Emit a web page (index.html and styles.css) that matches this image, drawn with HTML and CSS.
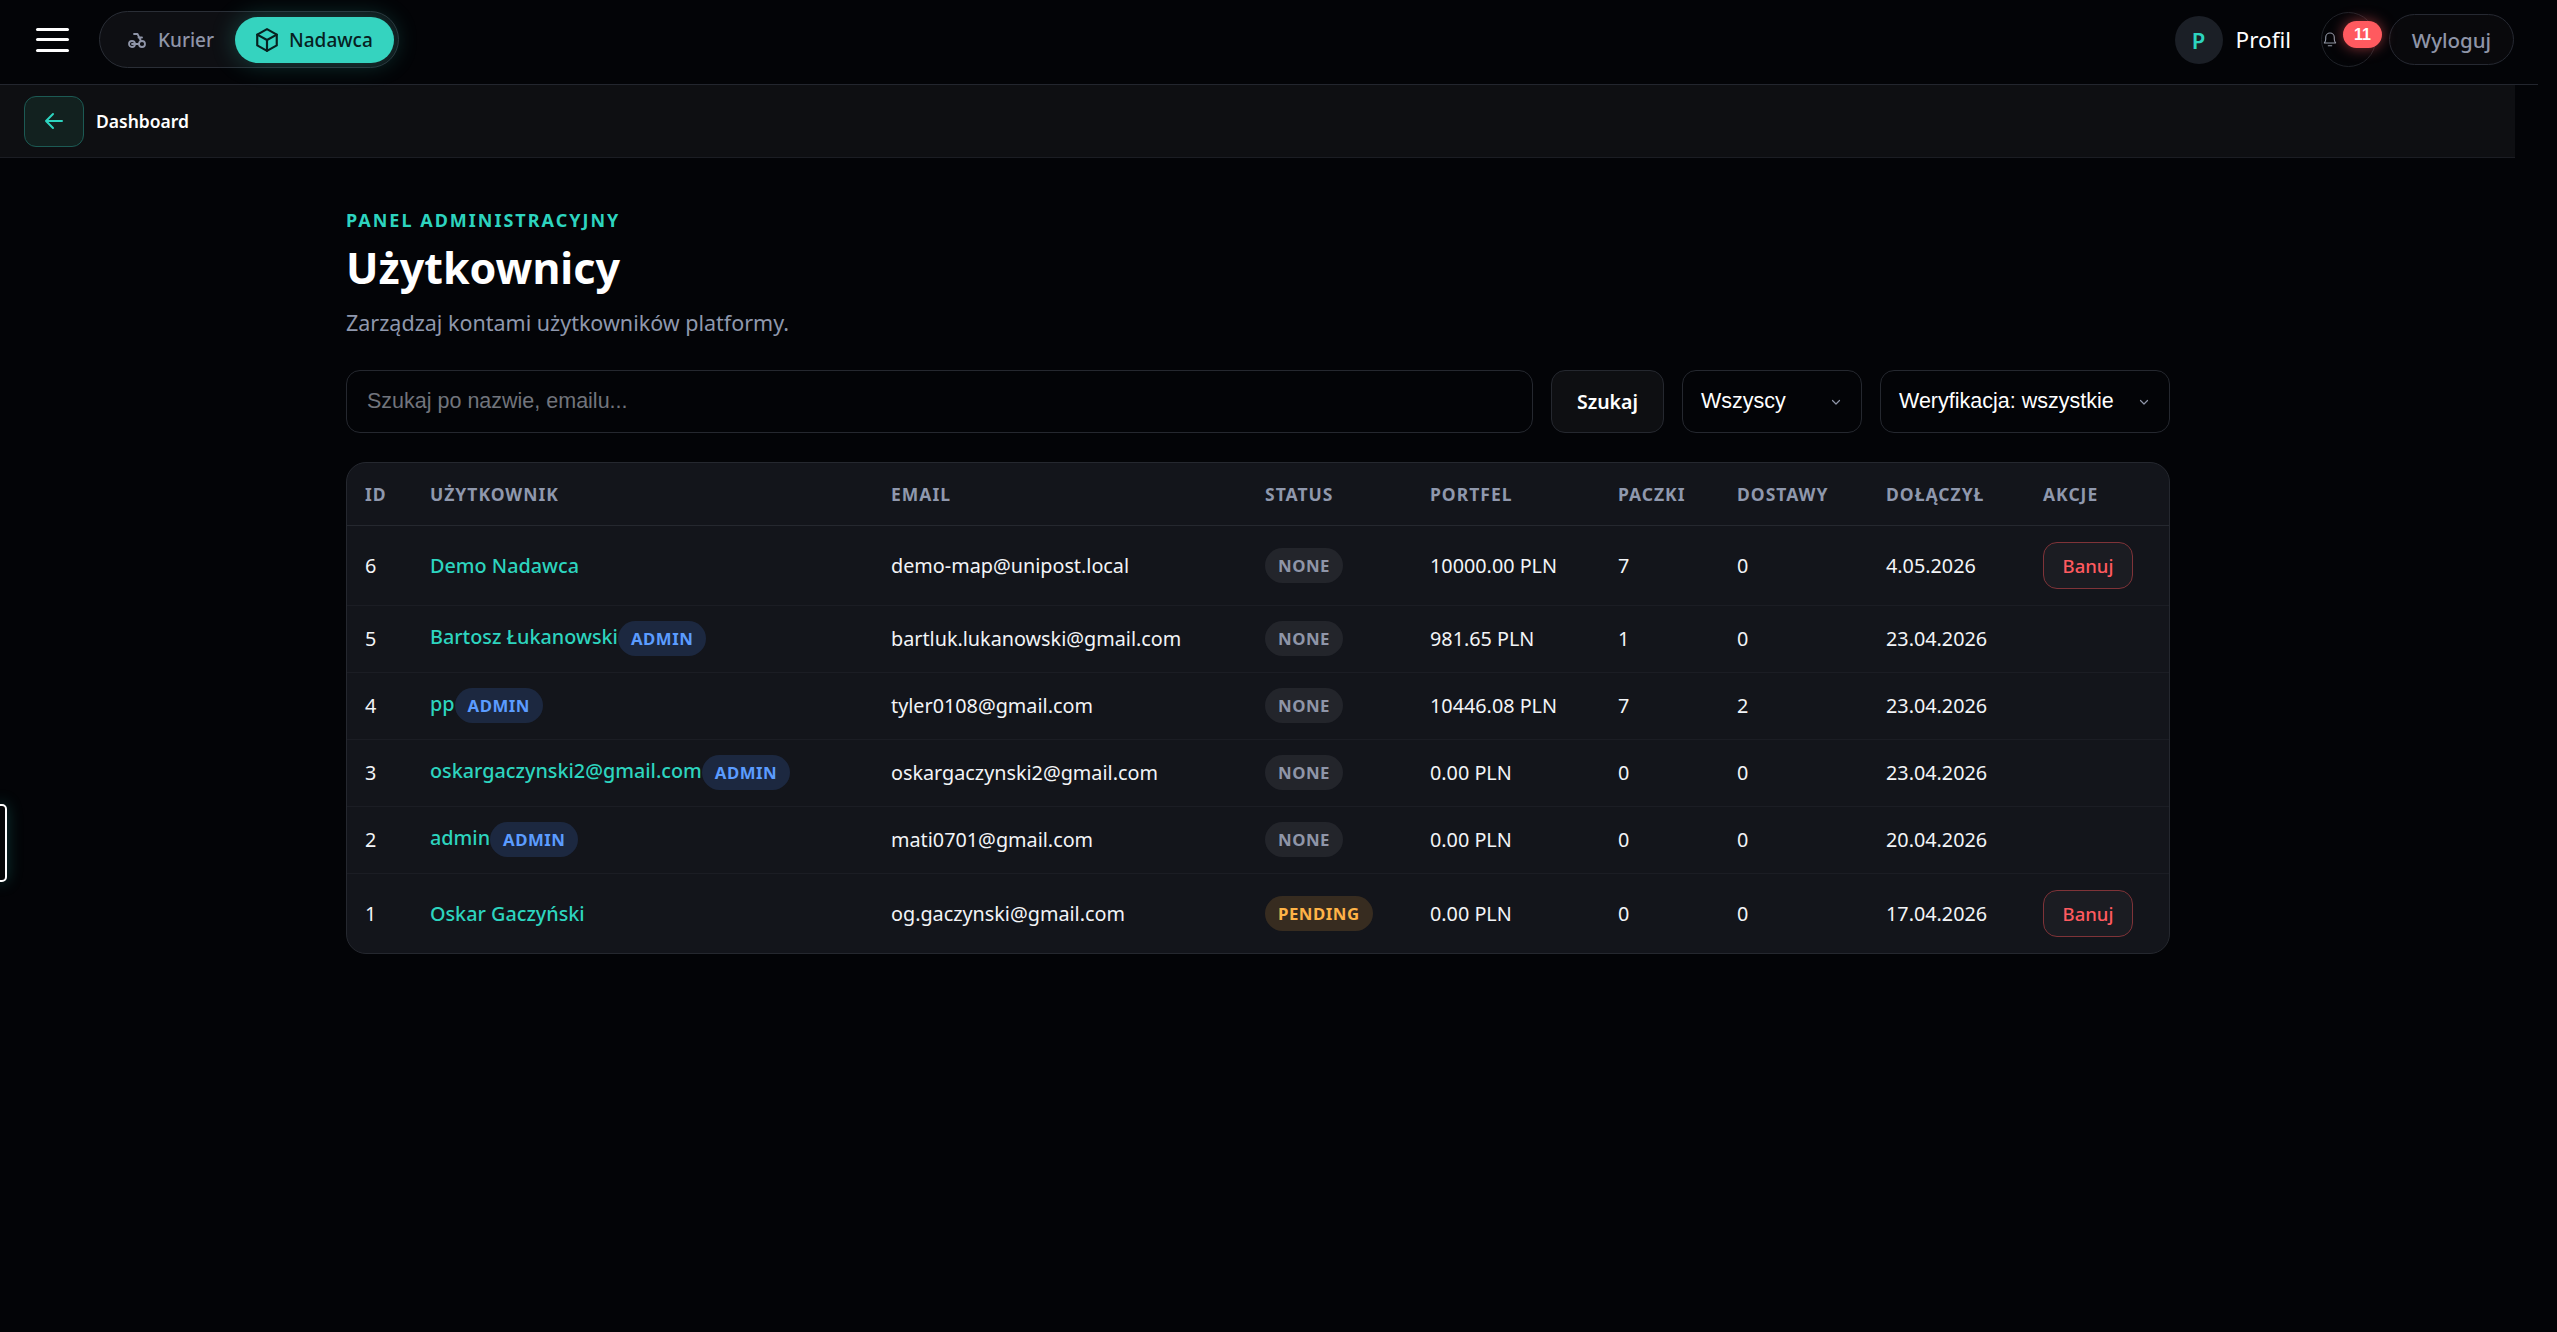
FILE: index.html
```html
<!DOCTYPE html>
<html lang="pl">
  <head>
    <meta charset="UTF-8" />
    <title>Użytkownicy</title>
    <link rel="stylesheet" href="styles.css">
  </head>
  <body>
    <header class="topbar">
      <div class="topbar-left">
        <button class="burger" aria-label="Menu"><span></span><span></span><span></span></button>
        <div class="mode-switch">
          <a class="mode">
            <svg class="mode-icon-small" viewBox="0 0 20 20" fill="none" stroke="currentColor" stroke-width="1.8" stroke-linecap="round" stroke-linejoin="round">
              <circle cx="5" cy="14" r="3" />
              <circle cx="15" cy="14" r="3" />
              <path d="M7 4h3.500l3.500 7M5 14h7M11.500 7.500h3.500" />
            </svg>
            Kurier
          </a>
          <a class="mode mode-active">
            <svg class="mode-icon" viewBox="0 0 24 24" fill="none" stroke="currentColor" stroke-width="2" stroke-linecap="round" stroke-linejoin="round">
              <path d="M12 2l9 5v10l-9 5-9-5V7z" />
              <path d="M3 7l9 5 9-5M12 12v10" />
            </svg>
            Nadawca
          </a>
        </div>
      </div>
      <div class="topbar-right">
        <a class="profile"><span class="avatar">P</span>Profil</a>
        <div class="bell">
          <svg class="bell-icon" viewBox="0 0 16 16" fill="none" stroke="currentColor" stroke-width="1" stroke-linecap="round" stroke-linejoin="round">
            <path d="M3 11.500c.9-1 1.200-1.800 1.200-3.500V6.500a3.800 3.800 0 0 1 7.600 0V8c0 1.700.3 2.500 1.200 3.500z" />
            <path d="M6.500 14h3" />
          </svg>
          <span class="bell-count">11</span>
        </div>
        <a class="logout">Wyloguj</a>
      </div>
    </header>

    <div class="crumbs">
      <a class="back">
        <svg viewBox="0 0 24 24" fill="none" stroke="currentColor" stroke-width="2" stroke-linecap="round" stroke-linejoin="round">
          <path d="M20 12H4M11 5l-7 7 7 7" />
        </svg>
      </a>
      <span class="crumb-title">Dashboard</span>
    </div>

    <div class="side-tab"></div>

    <main class="wrapper">
      <div class="eyebrow">PANEL ADMINISTRACYJNY</div>
      <h1 class="title">Użytkownicy</h1>
      <p class="subtitle">Zarządzaj kontami użytkowników platformy.</p>

      <form class="filters">
        <input class="search" type="text" placeholder="Szukaj po nazwie, emailu..." />
        <button class="search-btn" type="button">Szukaj</button>
        <div class="select select-role">
          Wszyscy
          <svg viewBox="0 0 12 12" fill="none" stroke="currentColor" stroke-width="1.200" stroke-linecap="round" stroke-linejoin="round"><path d="M2.500 4.500L6 8l3.500-3.500" /></svg>
        </div>
        <div class="select select-verify">
          Weryfikacja: wszystkie
          <svg viewBox="0 0 12 12" fill="none" stroke="currentColor" stroke-width="1.200" stroke-linecap="round" stroke-linejoin="round"><path d="M2.500 4.500L6 8l3.500-3.500" /></svg>
        </div>
      </form>

      <div class="card">
        <table class="users">
          <thead>
            <tr>
              <th class="col-id">ID</th>
              <th class="col-user">Użytkownik</th>
              <th class="col-email">Email</th>
              <th class="col-status">Status</th>
              <th class="col-wallet">Portfel</th>
              <th class="col-parcels">Paczki</th>
              <th class="col-deliveries">Dostawy</th>
              <th class="col-joined">Dołączył</th>
              <th class="col-actions">Akcje</th>
            </tr>
          </thead>
          <tbody>
            <tr class="row-tall">
              <td>6</td>
              <td><a class="user">Demo Nadawca</a></td>
              <td>demo-map@unipost.local</td>
              <td><span class="pill pill-none">NONE</span></td>
              <td>10000.00 PLN</td>
              <td>7</td>
              <td>0</td>
              <td>4.05.2026</td>
              <td><button class="ban" type="button">Banuj</button></td>
            </tr>
            <tr>
              <td>5</td>
              <td><a class="user">Bartosz Łukanowski</a><span class="pill pill-admin">ADMIN</span></td>
              <td>bartluk.lukanowski@gmail.com</td>
              <td><span class="pill pill-none">NONE</span></td>
              <td>981.65 PLN</td>
              <td>1</td>
              <td>0</td>
              <td>23.04.2026</td>
              <td></td>
            </tr>
            <tr>
              <td>4</td>
              <td><a class="user">pp</a><span class="pill pill-admin">ADMIN</span></td>
              <td>tyler0108@gmail.com</td>
              <td><span class="pill pill-none">NONE</span></td>
              <td>10446.08 PLN</td>
              <td>7</td>
              <td>2</td>
              <td>23.04.2026</td>
              <td></td>
            </tr>
            <tr>
              <td>3</td>
              <td><a class="user">oskargaczynski2@gmail.com</a><span class="pill pill-admin">ADMIN</span></td>
              <td>oskargaczynski2@gmail.com</td>
              <td><span class="pill pill-none">NONE</span></td>
              <td>0.00 PLN</td>
              <td>0</td>
              <td>0</td>
              <td>23.04.2026</td>
              <td></td>
            </tr>
            <tr>
              <td>2</td>
              <td><a class="user">admin</a><span class="pill pill-admin">ADMIN</span></td>
              <td>mati0701@gmail.com</td>
              <td><span class="pill pill-none">NONE</span></td>
              <td>0.00 PLN</td>
              <td>0</td>
              <td>0</td>
              <td>20.04.2026</td>
              <td></td>
            </tr>
            <tr class="row-tall">
              <td>1</td>
              <td><a class="user">Oskar Gaczyński</a></td>
              <td>og.gaczynski@gmail.com</td>
              <td><span class="pill pill-pending">PENDING</span></td>
              <td>0.00 PLN</td>
              <td>0</td>
              <td>0</td>
              <td>17.04.2026</td>
              <td><button class="ban" type="button">Banuj</button></td>
            </tr>
          </tbody>
        </table>
      </div>
    </main>
  </body>
</html>
```

FILE: styles.css
```css
html,
body {
  margin: 0;
  padding: 0;
  height: 100%;
}
body {
  background: #030407;
  color: #f2f4f7;
  font-family: 'Noto Sans', 'Open Sans', sans-serif;
  font-size: 20px;
  overflow: hidden;
}
a {
  cursor: pointer;
}

/* top bar */
.topbar {
  display: flex;
  align-items: center;
  justify-content: space-between;
  box-sizing: border-box;
  width: calc(100% - 19px);
  height: 85px;
  padding: 0 24px 5px 36px;
  border-bottom: 1px solid #23262e;
}
.topbar-left,
.topbar-right {
  display: flex;
  align-items: center;
}
.burger {
  display: flex;
  flex-direction: column;
  justify-content: space-between;
  width: 33px;
  height: 24px;
  margin-right: 30px;
  padding: 0;
  background: none;
  border: 0;
}
.burger span {
  display: block;
  height: 3px;
  border-radius: 2px;
  background: #fff;
}
.mode-switch {
  display: flex;
  align-items: center;
  box-sizing: border-box;
  width: 300px;
  height: 57px;
  padding: 0 4px;
  border: 1px solid #2a2e36;
  border-radius: 29px;
  background: #0e0f13;
}
.mode {
  display: flex;
  align-items: center;
  height: 46px;
  color: #8f95a8;
  font-size: 19px;
  font-weight: 500;
  padding-top: 1px;
}
.mode:first-child {
  width: 131px;
  padding-left: 23px;
  box-sizing: border-box;
}
.mode-icon-small {
  width: 20px;
  height: 20px;
  margin-right: 11px;
}
.mode-active {
  box-sizing: border-box;
  width: 159px;
  padding-left: 19px;
  border-radius: 23px;
  background: #35d3bf;
  color: #07211f;
  box-shadow: 0 0 24px rgba(53, 211, 191, 0.28);
}
.mode-icon {
  width: 26px;
  height: 26px;
  margin-right: 9px;
}
.profile {
  display: flex;
  align-items: center;
  margin-right: 30px;
  color: #fff;
  font-size: 22.500px;
}
.avatar {
  display: flex;
  align-items: center;
  justify-content: center;
  width: 48px;
  height: 48px;
  margin-right: 13px;
  border-radius: 50%;
  background: #1b1f26;
  color: #2dd4bf;
  font-size: 22px;
  font-weight: 600;
}
.bell {
  position: relative;
  box-sizing: border-box;
  width: 55px;
  height: 55px;
  margin-right: 13px;
  border: 1px solid #1f2228;
  border-radius: 50%;
}
.bell-icon {
  position: absolute;
  left: -1px;
  top: 17px;
  width: 18px;
  height: 18px;
  color: #9298a6;
}
.bell-count {
  position: absolute;
  left: 21px;
  top: 8px;
  width: 39px;
  height: 27px;
  border-radius: 14px;
  background: #ff5a5f;
  box-shadow: 0 0 14px rgba(255, 90, 95, 0.55);
  color: #fff;
  font-family: 'Liberation Sans', Arial, sans-serif;
  font-size: 16px;
  font-weight: 700;
  line-height: 27px;
  text-align: center;
}
.logout {
  box-sizing: border-box;
  width: 125px;
  height: 51px;
  border: 1px solid #262932;
  border-radius: 26px;
  background: #09090c;
  color: #8f95a8;
  font-size: 20.500px;
  font-weight: 500;
  line-height: 50px;
  text-align: center;
}

/* breadcrumb strip */
.crumbs {
  display: flex;
  align-items: center;
  box-sizing: border-box;
  width: calc(100% - 42px);
  height: 73px;
  padding-left: 24px;
  background: #0e0f12;
  border-bottom: 1px solid #1b1d23;
}
.back {
  display: flex;
  align-items: center;
  justify-content: center;
  box-sizing: border-box;
  width: 60px;
  height: 51px;
  margin-right: 12px;
  border: 1px solid #1c5a54;
  border-radius: 12px;
  background: #12211f;
  color: #2dd4bf;
}
.back svg {
  width: 24px;
  height: 24px;
}
.crumb-title {
  color: #fff;
  font-size: 17.500px;
  font-weight: 600;
}

/* tab sticking out of the left edge */
.side-tab {
  position: fixed;
  left: -6px;
  top: 804px;
  width: 13px;
  height: 78px;
  box-sizing: border-box;
  border: 2px solid #fff;
  border-radius: 5px;
  background: #050708;
  box-shadow: 0 0 16px rgba(45, 212, 191, 0.25);
}

/* page */
.wrapper {
  width: 1824px;
  margin-left: 346px;
  padding-top: 50px;
}
.eyebrow {
  color: #2dd4bf;
  font-size: 18px;
  font-weight: 700;
  letter-spacing: 2px;
  line-height: 24px;
}
.title {
  margin: 5px 0 0;
  color: #fff;
  font-size: 43px;
  font-weight: 700;
  line-height: 62px;
}
.subtitle {
  margin: 8px 0 0;
  color: #8f98ad;
  font-size: 21.500px;
  line-height: 32px;
}
.filters {
  display: flex;
  gap: 18px;
  margin-top: 31px;
  height: 63px;
}
.search,
.select {
  box-sizing: border-box;
  border: 1px solid #25282f;
  border-radius: 14px;
  background: #030407;
  color: #fff;
  font-family: 'Liberation Sans', Arial, sans-serif;
  font-size: 21.500px;
}
.search {
  flex: 1;
  min-width: 0;
  padding: 0 20px;
  outline: 0;
}
.search::placeholder {
  color: #71747c;
  opacity: 1;
}
.search-btn {
  box-sizing: border-box;
  width: 113px;
  border: 1px solid #25282f;
  border-radius: 14px;
  background: #0e0f12;
  color: #fff;
  font-family: 'Noto Sans', sans-serif;
  font-size: 19.500px;
  font-weight: 600;
}
.select {
  display: flex;
  align-items: center;
  justify-content: space-between;
  padding: 0 19px 0 18px;
}
.select svg {
  width: 12px;
  height: 12px;
  color: #8f95a8;
}
.select-role {
  width: 180px;
}
.select-verify {
  width: 290px;
}

/* users table */
.card {
  margin-top: 29px;
  border: 1px solid #25282f;
  border-radius: 20px;
  background: #13151b;
  overflow: hidden;
}
.users {
  width: 100%;
  border-collapse: collapse;
  table-layout: fixed;
}
.users th {
  box-sizing: border-box;
  height: 62px;
  padding: 0 18px;
  border-bottom: 1px solid #25282f;
  color: #8f98ad;
  font-size: 17.500px;
  font-weight: 700;
  letter-spacing: 1px;
  text-align: left;
  text-transform: uppercase;
}
.users td {
  box-sizing: border-box;
  height: 67px;
  padding: 0 18px;
  border-bottom: 1px solid #1b1d24;
  font-size: 19.800px;
  white-space: nowrap;
}
.users tr:last-child td {
  border-bottom: 0;
}
.users .row-tall td {
  height: 80px;
}
.col-id { width: 65px; }
.col-user { width: 461px; }
.col-email { width: 374px; }
.col-status { width: 165px; }
.col-wallet { width: 188px; }
.col-parcels { width: 119px; }
.col-deliveries { width: 149px; }
.col-joined { width: 157px; }
.col-actions { width: 144px; }
.user {
  color: #2dd4bf;
  font-weight: 500;
}
.pill {
  display: inline-block;
  padding: 0 13px;
  border-radius: 18px;
  font-size: 16.800px;
  font-weight: 700;
  letter-spacing: 0.5px;
  line-height: 35px;
  vertical-align: middle;
}
.pill-none {
  background: #23252b;
  color: #8f95a8;
}
.pill-admin {
  background: #1c2840;
  color: #5b9cff;
}
.pill-pending {
  background: #372c20;
  color: #ffb347;
}
.ban {
  box-sizing: border-box;
  width: 90px;
  height: 47px;
  border: 1px solid #7f3338;
  border-radius: 14px;
  background: #1b1c22;
  color: #ff5a5f;
  font-family: 'Noto Sans', sans-serif;
  font-size: 18.500px;
  font-weight: 500;
}
```
